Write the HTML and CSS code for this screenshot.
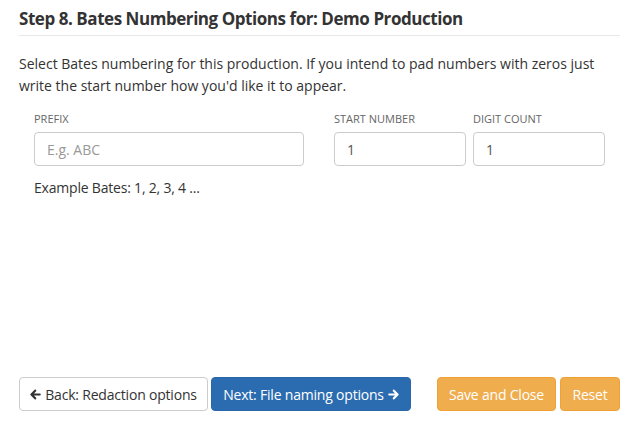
FILE: index.html
```html
<!DOCTYPE html>
<html>
<head>
<meta charset="utf-8">
<link rel="stylesheet" href="styles.css">
</head>
<body>
<div class="page">
  <h3 class="title">Step 8. Bates Numbering Options for: Demo Production</h3>
  <p class="intro">Select Bates numbering for this production. If you intend to pad numbers with zeros just write the start number how you'd like it to appear.</p>
  <div class="fields">
    <div class="field f-prefix">
      <label class="lbl">Prefix</label>
      <input class="inp" type="text" placeholder="E.g. ABC">
    </div>
    <div class="field f-start">
      <label class="lbl">Start Number</label>
      <input class="inp" type="text" value="1">
    </div>
    <div class="field f-digit">
      <label class="lbl">Digit Count</label>
      <input class="inp" type="text" value="1">
    </div>
  </div>
  <div class="example">Example Bates: 1, 2, 3, 4 ...</div>
  <div class="footer">
    <div class="group group-nav">
      <button class="btn btn-default btn-back"><svg class="ico" viewBox="0 0 12 12"><path d="M5.6 1.8 L1.6 6 L5.6 10.2 M1.8 6 H10.6" fill="none" stroke="currentColor" stroke-width="2.4" stroke-linecap="round" stroke-linejoin="round"/></svg>Back: Redaction options</button>
      <button class="btn btn-primary btn-next">Next: File naming options<svg class="ico ico-r" viewBox="0 0 12 12"><path d="M6.4 1.8 L10.4 6 L6.4 10.2 M10.2 6 H1.4" fill="none" stroke="currentColor" stroke-width="2.4" stroke-linecap="round" stroke-linejoin="round"/></svg></button>
    </div>
    <div class="group">
      <button class="btn btn-warning btn-save">Save and Close</button>
      <button class="btn btn-warning btn-reset">Reset</button>
    </div>
  </div>
</div>
</body>
</html>
```
FILE: styles.css
```css
html, body {
  margin: 0;
  padding: 0;
  background: #fff;
}
body {
  font-family: "Open Sans", "Noto Sans", sans-serif;
  color: #333;
  font-size: 14px;
}
.page {
  box-sizing: border-box;
  height: 423px;
  padding: 0 11px 12px 19px;
  display: flex;
  flex-direction: column;
}
.title {
  margin: 8px 0 0 0;
  padding-bottom: 6px;
  font-size: 17px;
  font-weight: 700;
  line-height: 21px;
  border-bottom: 1px solid #e8e8e8;
  letter-spacing: -0.45px;
}
.intro {
  margin: 17px 0 0 0;
  line-height: 22px;
  font-size: 14px;
  letter-spacing: 0;
}
.fields {
  display: flex;
  margin: 15px 0 0 15px;
}
.field {
  display: flex;
  flex-direction: column;
}
.f-prefix { width: 270px; }
.f-start { width: 132px; margin-left: 30px; }
.f-digit { width: 132px; margin-left: 7px; }
.lbl {
  font-size: 11px;
  text-transform: uppercase;
  color: #666;
  line-height: 14px;
  margin-bottom: 6px;
}
.inp {
  box-sizing: border-box;
  width: 100%;
  height: 34px;
  border: 1px solid #ccc;
  border-radius: 4px;
  padding: 0 12px;
  font-family: inherit;
  font-size: 14px;
  color: #555;
}
.inp::placeholder {
  color: #999;
}
.example {
  margin: 12px 0 0 15px;
  line-height: 20px;
  letter-spacing: -0.2px;
}
.footer {
  margin-top: auto;
  display: flex;
  justify-content: space-between;
}
.group {
  display: flex;
  gap: 4px;
}
.group-nav {
  gap: 3px;
}
.btn {
  box-sizing: border-box;
  height: 34px;
  padding: 0;
  border: 1px solid transparent;
  border-radius: 4px;
  font-family: inherit;
  font-size: 14px;
  letter-spacing: -0.2px;
  white-space: nowrap;
  display: inline-flex;
  align-items: center;
  justify-content: center;
  flex: none;
}
.btn-back { width: 189px; }
.btn-next { width: 200px; }
.btn-save { width: 119px; }
.btn-reset { width: 60px; }
.btn-default {
  background: #fff;
  border-color: #ccc;
  color: #333;
}
.btn-primary {
  background: #2b6cb0;
  border-color: #2a67a8;
  color: #fff;
}
.btn-warning {
  background: #f0ad4e;
  border-color: #eea236;
  color: #fff;
}
.ico {
  width: 11px;
  height: 11px;
  margin-right: 4px;
  flex: none;
}
.ico-r {
  margin-right: 0;
  margin-left: 4px;
}
```
